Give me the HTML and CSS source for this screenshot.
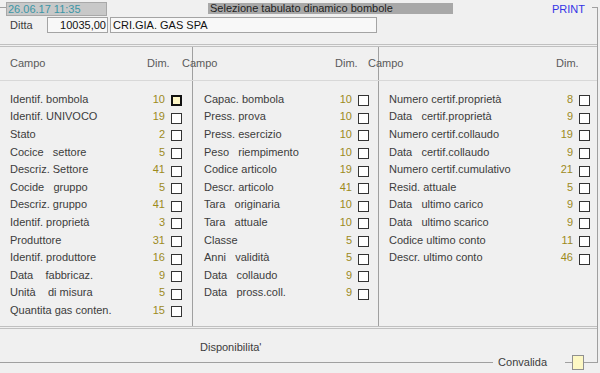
FILE: index.html
```html
<!doctype html>
<html lang="it">
<head>
  <meta charset="UTF-8" />
  <title>Selezione tabulato dinamico bombole</title>
  <link rel="stylesheet" href="styles.css">
</head>
<body>

  <div class="frame">

    <div class="topbar">
      <div class="date">26.06.17 11:35</div>
      <div class="title">Selezione tabulato dinamico bombole</div>
      <div class="print">PRINT</div>
    </div>

    <div class="ditta">
      <span class="ditta-label">Ditta</span>
      <span class="field code">10035,00</span>
      <span class="field name">CRI.GIA. GAS SPA</span>
    </div>

    <div class="panel">

      <!-- colonna 1 -->
      <div class="col col1">
        <div class="head"><span>Campo</span><span class="dim">Dim.</span></div>
        <div class="rows">
          <div class="row"><span>Identif. bombola</span><b>10</b><i class="chk on"></i></div>
          <div class="row"><span>Identif. UNIVOCO</span><b>19</b><i class="chk"></i></div>
          <div class="row"><span>Stato</span><b>2</b><i class="chk"></i></div>
          <div class="row"><span>Cocice   settore</span><b>5</b><i class="chk"></i></div>
          <div class="row"><span>Descriz. Settore</span><b>41</b><i class="chk"></i></div>
          <div class="row"><span>Cocide   gruppo</span><b>5</b><i class="chk"></i></div>
          <div class="row"><span>Descriz. gruppo</span><b>41</b><i class="chk"></i></div>
          <div class="row"><span>Identif. proprietà</span><b>3</b><i class="chk"></i></div>
          <div class="row"><span>Produttore</span><b>31</b><i class="chk"></i></div>
          <div class="row"><span>Identif. produttore</span><b>16</b><i class="chk"></i></div>
          <div class="row"><span>Data    fabbricaz.</span><b>9</b><i class="chk"></i></div>
          <div class="row"><span>Unità    di misura</span><b>5</b><i class="chk"></i></div>
          <div class="row"><span>Quantita gas conten.</span><b>15</b><i class="chk"></i></div>
        </div>
      </div>

      <!-- colonna 2 -->
      <div class="col col2">
        <div class="head"><span>Campo</span><span class="dim">Dim.</span></div>
        <div class="rows">
          <div class="row"><span>Capac. bombola</span><b>10</b><i class="chk"></i></div>
          <div class="row"><span>Press. prova</span><b>10</b><i class="chk"></i></div>
          <div class="row"><span>Press. esercizio</span><b>10</b><i class="chk"></i></div>
          <div class="row"><span>Peso   riempimento</span><b>10</b><i class="chk"></i></div>
          <div class="row"><span>Codice articolo</span><b>19</b><i class="chk"></i></div>
          <div class="row"><span>Descr. articolo</span><b>41</b><i class="chk"></i></div>
          <div class="row"><span>Tara   originaria</span><b>10</b><i class="chk"></i></div>
          <div class="row"><span>Tara   attuale</span><b>10</b><i class="chk"></i></div>
          <div class="row"><span>Classe</span><b>5</b><i class="chk"></i></div>
          <div class="row"><span>Anni   validità</span><b>5</b><i class="chk"></i></div>
          <div class="row"><span>Data   collaudo</span><b>9</b><i class="chk"></i></div>
          <div class="row"><span>Data   pross.coll.</span><b>9</b><i class="chk"></i></div>
        </div>
      </div>

      <!-- colonna 3 -->
      <div class="col col3">
        <div class="head"><span>Campo</span><span class="dim">Dim.</span></div>
        <div class="rows">
          <div class="row"><span>Numero certif.proprietà</span><b>8</b><i class="chk"></i></div>
          <div class="row"><span>Data   certif.proprietà</span><b>9</b><i class="chk"></i></div>
          <div class="row"><span>Numero certif.collaudo</span><b>19</b><i class="chk"></i></div>
          <div class="row"><span>Data   certif.collaudo</span><b>9</b><i class="chk"></i></div>
          <div class="row"><span>Numero certif.cumulativo</span><b>21</b><i class="chk"></i></div>
          <div class="row"><span>Resid. attuale</span><b>5</b><i class="chk"></i></div>
          <div class="row"><span>Data   ultimo carico</span><b>9</b><i class="chk"></i></div>
          <div class="row"><span>Data   ultimo scarico</span><b>9</b><i class="chk"></i></div>
          <div class="row"><span>Codice ultimo conto</span><b>11</b><i class="chk"></i></div>
          <div class="row"><span>Descr. ultimo conto</span><b>46</b><i class="chk"></i></div>
        </div>
      </div>

    </div>

    <div class="dispo">Disponibilita'</div>

    <div class="footer">
      <span class="line grow"></span>
      <span class="conv">Convalida</span>
      <span class="line short"></span>
      <span class="conv-box"></span>
      <span class="line grow2"></span>
    </div>

  </div>

</body>
</html>
```

FILE: styles.css
```css
body {
  margin: 0;
  height: 373px;
  overflow: hidden;
  background: #f0f0f0;
  font-family: "Liberation Sans", Arial, sans-serif;
  font-size: 11px;
  color: #3c3c3c;
}

.frame {
  box-sizing: border-box;
  width: 598px;
  margin-top: 7px;
  border-top: 1px solid #a0a0a0;
  border-right: 1px solid #a0a0a0;
  display: flex;
  flex-direction: column;
}

/* barra in alto, copre il bordo del riquadro */
.topbar {
  display: flex;
  align-items: flex-start;
  margin: -6px 5px 0 6px;
  height: 14px;
  background: #f0f0f0;
}

.date {
  box-sizing: border-box;
  width: 101px;
  height: 14px;
  padding-left: 1px;
  line-height: 12px;
  background: #c8c8c8;
  border: 1px solid #a8a8a8;
  color: #3a96a6;
}

.title {
  margin: 1px 0 0 101px;
  width: 243px;
  height: 11px;
  line-height: 11px;
  padding-left: 2px;
  background: #a8a8a8;
  color: #1e1e1e;
}

.print {
  margin-left: auto;
  margin-right: 7px;
  line-height: 14px;
  color: #3434e6;
}

.ditta {
  display: flex;
  align-items: center;
  margin-top: 1px;
  padding-left: 10px;
  height: 16px;
}

.ditta-label {
  width: 37px;
}

.field {
  box-sizing: border-box;
  height: 16px;
  line-height: 14px;
  background: #f8f8f8;
  border: 1px solid #a4a4a4;
  color: #111;
}

.code {
  width: 61px;
  padding-right: 1px;
  text-align: right;
}

.name {
  width: 267px;
  margin-left: 2px;
  padding-left: 2px;
}

/* pannello a tre colonne */
.panel {
  box-sizing: border-box;
  height: 285px;
  margin-top: 11px;
  border-top: 3px double #c0c0c0;
  border-bottom: 3px double #c0c0c0;
  display: grid;
  grid-template-columns: 192px 186px 1fr;
}

.col + .col {
  border-left: 1px solid #a0a0a0;
}

.head {
  position: relative;
  height: 33px;
  line-height: 33px;
  border-bottom: 1px solid #d8d8d8;
  color: #5a5a5a;
}

.head .dim {
  position: absolute;
  top: 0;
}

.col1 .head { padding-left: 10px; }
.col1 .head .dim { left: 147px; }
.col2 .head { margin-left: -11px; }
.col2 .head .dim { left: 153px; }
.col3 .head { margin-left: -11px; }
.col3 .head .dim { left: 188px; }

.rows {
  padding-top: 9px;
}

.row {
  display: grid;
  grid-template-columns: 1fr auto 11px;
  column-gap: 6px;
  align-items: center;
  height: 17.6px;
  white-space: pre;
}

.col1 .row { padding: 0 10px 0 10px; }
.col2 .row { padding: 0 9px 0 11px; }
.col3 .row { padding: 0 7px 0 10px; }

.row b {
  font-weight: normal;
  color: #9c8a1c;
}

.chk {
  box-sizing: border-box;
  width: 11px;
  height: 11px;
  margin-top: 4px;
  border: 1px solid #333;
  background: #fff;
}

.chk.on {
  border: 2px solid #111;
  background: #fdf6c6;
}

.dispo {
  height: 26px;
  line-height: 36px;
  padding-left: 200px;
}

.footer {
  display: flex;
  align-items: center;
  height: 15px;
  line-height: 15px;
  margin-bottom: -7px;
}

.line {
  height: 0;
  border-top: 1px solid #a0a0a0;
}

.grow { flex: 1; }
.short { width: 7px; }
.grow2 { width: 13px; }

.conv {
  margin: 0 18px 0 5px;
}

.conv-box {
  box-sizing: border-box;
  width: 12px;
  height: 15px;
  border: 1px solid #909090;
  background: #fdf8c4;
}
```
